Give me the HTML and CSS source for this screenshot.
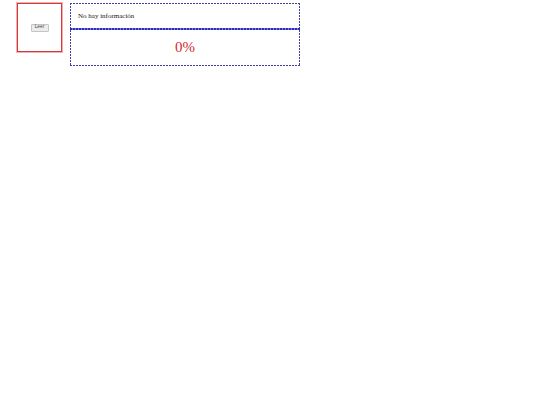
FILE: index.html
```html
<!DOCTYPE html>
<html lang="es">
<head>
<meta charset="utf-8">
<link rel="stylesheet" href="styles.css">
</head>
<body>
<div class="page">
  <div class="reader">
    <button class="btn">Leer</button>
  </div>
  <div class="panel">
    <div class="info">No hay información</div>
    <div class="divider"></div>
    <div class="progress">0%</div>
  </div>
</div>
</body>
</html>
```
FILE: styles.css
```css
html, body {
  margin: 0;
  padding: 0;
  background: #fff;
}
.page {
  display: flex;
  align-items: flex-start;
  gap: 8px;
  padding: 3px 0 0 17px;
  font-family: "Liberation Serif", "Times New Roman", serif;
}
.reader {
  box-sizing: border-box;
  width: 45px;
  height: 49px;
  border: 1px solid #cf3a3a;
  box-shadow: 0 0 0 1px #f2b0b0;
  display: flex;
  align-items: center;
  justify-content: center;
}
.btn {
  box-sizing: border-box;
  width: 18px;
  height: 8px;
  padding: 0;
  font-family: "Liberation Sans", Arial, sans-serif;
  font-size: 4.8px;
  line-height: 1;
  color: #444;
  background: #ececec;
  border: 1px solid #c4c4c4;
  border-radius: 1px;
}
.panel {
  box-sizing: border-box;
  width: 230px;
  height: 63px;
  padding: 1px;
  display: flex;
  flex-direction: column;
  background:
    repeating-linear-gradient(90deg, #4040a8 0 2px, transparent 2px 3px) top left / 100% 1px no-repeat,
    repeating-linear-gradient(90deg, #4040a8 0 2px, transparent 2px 3px) bottom left / 100% 1px no-repeat,
    repeating-linear-gradient(180deg, #4040a8 0 2px, transparent 2px 3px) top left / 1px 100% no-repeat,
    repeating-linear-gradient(180deg, #4040a8 0 2px, transparent 2px 3px) top right / 1px 100% no-repeat;
}
.info {
  height: 24px;
  display: flex;
  align-items: center;
  padding-left: 7px;
  font-size: 7px;
  color: #1a1a1a;
}
.divider {
  height: 2px;
  margin: 0 -1px;
  background: repeating-linear-gradient(90deg, #2a2ac0 0 2px, #8080dc 2px 3px);
}
.progress {
  flex: 1;
  display: flex;
  align-items: center;
  justify-content: center;
  font-size: 15px;
  color: #d42a2a;
}
```
